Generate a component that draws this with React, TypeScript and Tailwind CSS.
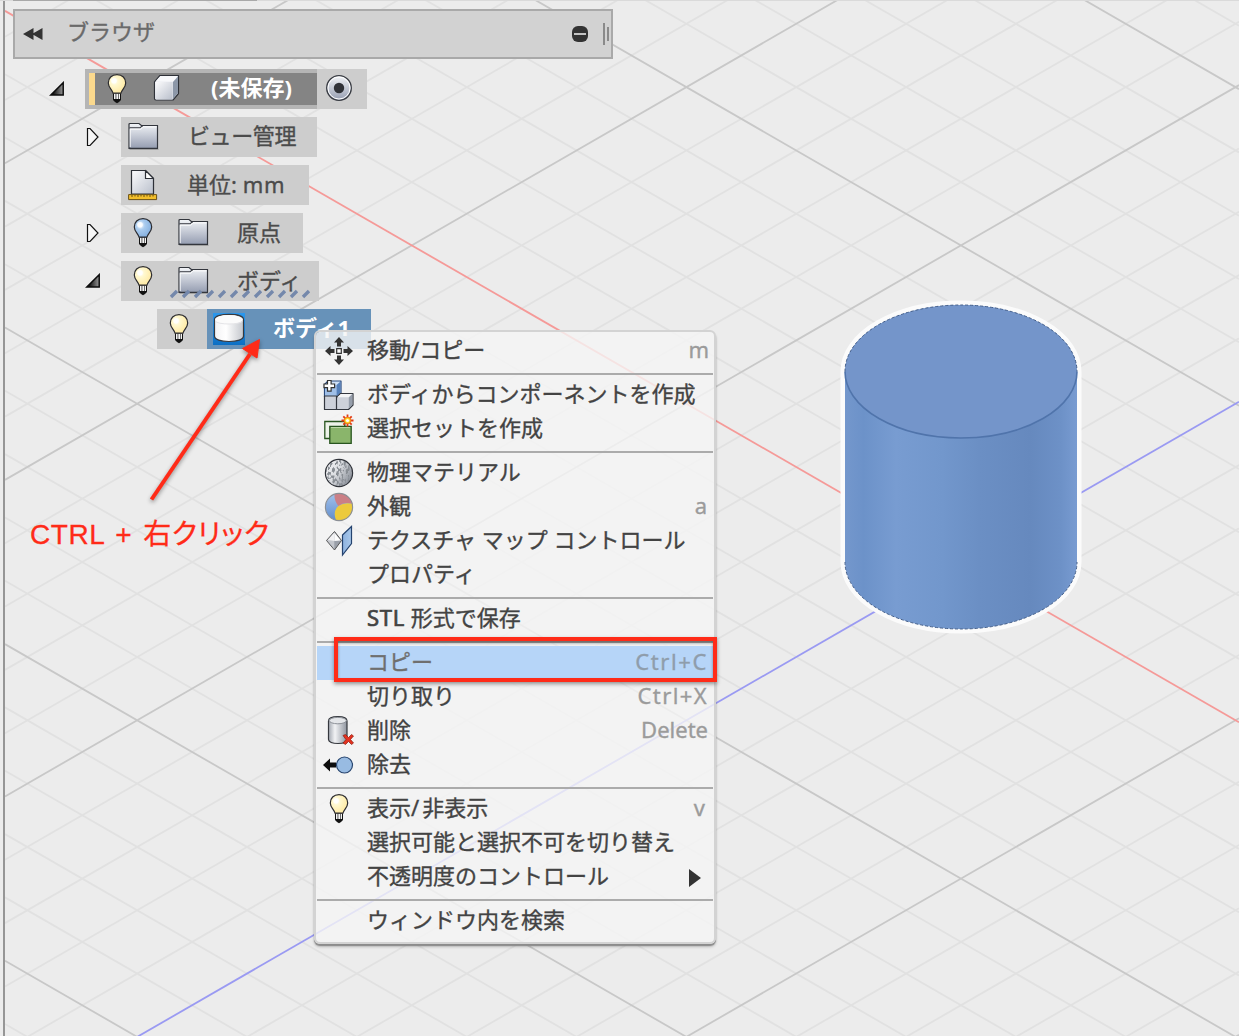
import type { ReactNode } from "react";

const SLOPE = 158.3 / 274.6;
const STEPS = Array.from({ length: 45 }, (_, i) => i - 22);

function gridPath(sign: number, k: number) {
  const at = (x: number) => (562 + 63.32 * k + sign * SLOPE * (x - 961)).toFixed(1);
  return `M5 ${at(5)}L1239 ${at(1239)}`;
}

function Viewport() {
  const minor = STEPS.filter((k) => k % 5 !== 0);
  const major = STEPS.filter((k) => k % 5 === 0 && k !== 0);
  const lines = (ks: number[]) => ks.map((k) => gridPath(1, k) + gridPath(-1, k)).join("");
  const body = "M845 371.5A116 66.5 0 0 1 1077 371.5V562A116 67 0 0 1 845 562Z";
  return (
    <svg className="absolute inset-0" width="1239" height="1036" viewBox="0 0 1239 1036">
      <defs>
        <linearGradient id="side">
          <stop offset="0" stopColor="#7497cc" />
          <stop offset=".08" stopColor="#6c92c9" />
          <stop offset=".22" stopColor="#789cd1" />
          <stop offset=".42" stopColor="#7297cc" />
          <stop offset=".58" stopColor="#6b8fc4" />
          <stop offset=".8" stopColor="#6689be" />
          <stop offset=".93" stopColor="#6d91c7" />
          <stop offset="1" stopColor="#789bd1" />
        </linearGradient>
      </defs>
      <g fill="none">
        <path d={lines(minor)} stroke="#e1e1e1" strokeWidth="1.800" />
        <path d={lines(major)} stroke="#c8c8c8" strokeWidth="1.800" />
        <path d={gridPath(1, 0)} stroke="#f59a98" strokeWidth="1.800" />
        <path d={gridPath(-1, 0)} stroke="#9a9af2" strokeWidth="1.800" />
      </g>
      <path d={body} fill="#fbfbfb" stroke="#fbfbfb" strokeWidth="9" strokeLinejoin="round" />
      <path d={body} fill="url(#side)" />
      <ellipse cx="961" cy="371.500" rx="116" ry="66.500" fill="#7495ca" />
      <path d="M845 371.500A116 66.500 0 0 0 1077 371.500" fill="none" stroke="#5074ab" strokeWidth="1.600" />
      <path d="M845 371.500A116 66.500 0 0 1 1077 371.500" fill="none" stroke="#46608a" strokeWidth="1" strokeDasharray="3 2" />
      <path d="M845 562A116 67 0 0 0 1077 562" fill="none" stroke="#46608a" strokeWidth="1" strokeDasharray="3 2" />
    </svg>
  );
}

function Gradients() {
  return (
    <svg className="absolute size-0">
      <defs>
        <linearGradient id="steel" x2="0" y2="1">
          <stop offset="0" stopColor="#f3f5f8" />
          <stop offset="1" stopColor="#959db1" />
        </linearGradient>
        <linearGradient id="pale" x2="1" y2="1">
          <stop offset="0" stopColor="#fdfdfe" />
          <stop offset="1" stopColor="#b9bfcb" />
        </linearGradient>
        <linearGradient id="metal">
          <stop offset="0" stopColor="#a2a7b0" />
          <stop offset=".35" stopColor="#f2f3f5" />
          <stop offset="1" stopColor="#8e949e" />
        </linearGradient>
        <linearGradient id="stone" x2="1" y2=".6">
          <stop offset="0" stopColor="#f4f4f6" />
          <stop offset=".5" stopColor="#dcdee2" />
          <stop offset="1" stopColor="#8f949d" />
        </linearGradient>
        <linearGradient id="drum">
          <stop offset="0" stopColor="#f2f2f4" />
          <stop offset=".4" stopColor="#fff" />
          <stop offset="1" stopColor="#c3c6cc" />
        </linearGradient>
        <linearGradient id="ink">
          <stop offset=".2" stopColor="#111" />
          <stop offset="1" stopColor="#999" />
        </linearGradient>
        <linearGradient id="sky">
          <stop offset="0" stopColor="#8db2df" />
          <stop offset="1" stopColor="#a9c8ea" />
        </linearGradient>
        <linearGradient id="marine" x2="0" y2="1">
          <stop offset="0" stopColor="#a3c3ec" />
          <stop offset="1" stopColor="#5f8ccc" />
        </linearGradient>
        <radialGradient id="warm" cx=".35" cy=".35" r=".75">
          <stop offset="0" stopColor="#fff" />
          <stop offset=".3" stopColor="#fff8cf" />
          <stop offset="1" stopColor="#ffe79b" />
        </radialGradient>
        <radialGradient id="cool" cx=".35" cy=".35" r=".75">
          <stop offset="0" stopColor="#fff" />
          <stop offset=".35" stopColor="#a9cbee" />
          <stop offset="1" stopColor="#7fabdc" />
        </radialGradient>
      </defs>
    </svg>
  );
}

const Bulb = ({ off = false }: { off?: boolean }) => (
  <svg className="block shrink-0" width="22" height="32" viewBox="0 0 22 32">
    <path d="M7 19.500h8V27l-2 2-2 1.300-2-1.300-2-2z" fill="#111" />
    <path d="M8 20.500h1.600v5.500H8zM10.300 20.500h1.900v5.500h-1.900zM12.800 20.500h1.200v5.500h-1.200z" fill="#f4f4f4" />
    <path
      d="M11 1.600C5.600 1.600 2.300 5.300 2.300 10c0 4.500 3.800 6.200 4.700 10.200h8c.9-4 4.700-5.700 4.700-10.200 0-4.700-3.300-8.400-8.700-8.400z"
      fill={off ? "url(#cool)" : "url(#warm)"}
      stroke="#2c2c30"
      strokeWidth="1.200"
    />
    <circle cx="8" cy="7.800" r="2.800" fill="#fff" opacity=".85" />
  </svg>
);

const Folder = () => (
  <svg className="block shrink-0" width="32" height="30" viewBox="0 0 32 30">
    <path d="M2.500 27.500h29" stroke="#777" opacity=".5" />
    <path d="M2 26.300V2.500q0-1 1-1h9l3 2.500v-.5h15.500v22.800z" fill="url(#steel)" stroke="#33363d" strokeWidth="1.200" />
    <path d="M2.500 5.800H13l2.200-2" fill="none" stroke="#33363d" strokeWidth="1.100" />
    <path d="M3.200 25V7.200h10.500l2.300-2.300h13.600" fill="none" stroke="#fff" strokeWidth=".9" />
  </svg>
);

const Cube = () => (
  <svg className="block" width="28" height="28" viewBox="0 0 28 28">
    <path d="M1.500 8L7 1.500h18.500v18L20 26H3q-1.500 0-1.500-1.500z" fill="#dfe3ea" stroke="#2e3138" strokeWidth="1.200" strokeLinejoin="round" />
    <path d="M2.200 7.800L7.300 2.100h17.500L20 7.800z" fill="#f8f9fb" />
    <path d="M2.200 8h17.300v17.400H3.200l-1-1z" fill="url(#pale)" />
    <path d="M20 8l5-5.500V19l-5 6z" fill="#8c97a8" />
  </svg>
);

const Ruler = () => (
  <svg className="block shrink-0" width="32" height="32" viewBox="0 0 32 32">
    <path d="M4.500 25V1.500h14l8 8V25z" fill="url(#pale)" stroke="#2e3138" strokeWidth="1.200" />
    <path d="M18.500 1.500v8h8z" fill="#fff" stroke="#2e3138" strokeWidth="1.200" strokeLinejoin="round" />
    <path d="M1.600 25.600h28v5h-28z" fill="#f3bf2b" stroke="#6b5115" strokeWidth="1" />
    <path d="M5 26v2M8 26v1.500M11 26v2M14 26v1.500M17 26v2M20 26v1.500M23 26v2M26 26v1.500" stroke="#6b5115" />
  </svg>
);

const Drum = () => (
  <svg className="block" width="32" height="32" viewBox="0 0 32 32">
    <path d="M1.500 6.500C1.500 3 8 1.300 16 1.300S30.500 3 30.500 6.500V23c0 3.500-6.500 5.500-14.500 5.500S1.500 26.500 1.500 23z" fill="url(#drum)" stroke="#36393f" strokeWidth="1.200" />
    <ellipse cx="16" cy="6.600" rx="13.700" ry="4.500" fill="#fbfbfb" />
    <path d="M2.300 8C4 12 28 12 29.700 8" fill="none" stroke="#e4e4e7" />
  </svg>
);

const Expanded = () => (
  <svg className="block" width="16" height="16" viewBox="0 0 16 16">
    <path d="M1.800 14L14.200 1.700V14z" fill="url(#ink)" stroke="#0d0d0d" strokeWidth="1.500" />
  </svg>
);

const Collapsed = () => (
  <svg className="block" width="14" height="20" viewBox="0 0 14 20">
    <path d="M1.500 1.500h2.500l8 8.500-8 8.500h-2.500z" fill="#f7f7f7" stroke="#111" strokeWidth="1.200" />
  </svg>
);

function Label({ children, className }: { children: ReactNode; className: string }) {
  return (
    <span className={`block shrink-0 whitespace-nowrap text-[22px] leading-none [-webkit-text-stroke:0.35px] ${className}`}>
      {children}
    </span>
  );
}

function Browser() {
  return (
    <section className="absolute top-[9px] left-[13px] w-[600px] text-[#4b4b4b]">
      <header className="flex h-[50px] items-center border-2 border-[#a9a9a9] bg-[#d2d2d2]">
        <svg className="ml-2" width="20" height="14" viewBox="0 0 20 14">
          <path d="M10.500 1v12L0 7zM19.500 1v12L9 7z" fill="#333" />
        </svg>
        <Label className="-mt-[6px] ml-6 w-[94px] text-[#6a6a6a]">ブラウザ</Label>
        <div className="ml-auto flex h-4 w-4 items-center justify-center rounded-[6px] bg-[#333]">
          <div className="h-[2px] w-3 bg-[#c4c4c4]" />
        </div>
        <div className="ml-[15px] h-[22px] w-[2px] bg-[#8a8a8a]" />
        <div className="mr-[2px] ml-[2px] h-[14px] w-[2px] bg-[#8a8a8a]" />
      </header>
      <div className="mt-[10px] flex flex-col gap-2">
        <div className="flex h-10 items-center">
          <div className="ml-9 w-9">
            <Expanded />
          </div>
          <div className="flex h-10 w-[232px] border-y-4 border-l-4 border-[#b5b5b5] bg-[#848484]">
            <div className="w-[6px] bg-[#fbd98d]" />
            <div className="ml-[11px]">
              <Bulb />
            </div>
            <div className="mt-[1px] ml-[25px]">
              <Cube />
            </div>
            <Label className="mt-[3px] ml-[30px] font-bold text-white [-webkit-text-stroke:0]">(未保存)</Label>
          </div>
          <div className="flex h-10 w-[50px] items-center bg-[#cdcdcd] pl-2">
            <svg className="-mt-[2px]" width="28" height="28" viewBox="0 0 28 28">
              <circle cx="14" cy="14" r="12.300" fill="url(#steel)" stroke="#383b42" strokeWidth="1.300" />
              <circle cx="14" cy="14" r="11" fill="none" stroke="#fff" />
              <circle cx="14" cy="14" r="5.200" fill="#303238" />
            </svg>
          </div>
        </div>
        <div className="flex h-10 items-center">
          <div className="ml-[73px] w-[35px]">
            <Collapsed />
          </div>
          <div className="flex h-10 w-[196px] items-center bg-[#cdcdcd] pl-[6px]">
            <Folder />
            <Label className="-mt-[4px] ml-[29px] tracking-[-0.4px]">ビュー管理</Label>
          </div>
        </div>
        <div className="ml-[108px] flex h-10 w-[188px] items-center bg-[#cdcdcd] pl-[6px]">
          <Ruler />
          <Label className="-mt-[3px] ml-[28px]">
            単位: <span className="tracking-[0.800px]">mm</span>
          </Label>
        </div>
        <div className="flex h-10 items-center">
          <div className="ml-[73px] w-[35px]">
            <Collapsed />
          </div>
          <div className="flex h-10 w-[182px] items-center bg-[#cdcdcd] pl-[11px]">
            <Bulb off />
            <div className="ml-[23px]">
              <Folder />
            </div>
            <Label className="-mt-[3px] ml-7">原点</Label>
          </div>
        </div>
        <div className="flex h-10 items-center">
          <div className="ml-[72px] w-9">
            <Expanded />
          </div>
          <div className="relative flex h-10 w-[198px] items-center bg-[#cdcdcd] pl-[11px]">
            <Bulb />
            <div className="ml-[23px]">
              <Folder />
            </div>
            <Label className="-mt-[3px] ml-7">ボディ</Label>
            <svg className="absolute bottom-[2px] left-[48px]" width="144" height="10" viewBox="0 0 144 10">
              <path
                d={Array.from({ length: 12 }, (_, i) => `M${2 + i * 12} 8l6-6`).join("")}
                stroke="#7488ab"
                strokeWidth="3.400"
              />
            </svg>
          </div>
        </div>
        <div className="ml-[144px] flex h-10">
          <div className="flex w-[50px] items-center bg-[#cdcdcd] pl-[11px]">
            <Bulb />
          </div>
          <div className="flex w-[164px] items-center bg-[#6792b9] pl-[6px]">
            <div className="size-8 bg-linear-to-b from-[#2b98ee] to-[#0b6fc4]">
              <Drum />
            </div>
            <Label className="-mt-[4px] ml-7 font-bold text-white [-webkit-text-stroke:0]">ボディ1</Label>
          </div>
        </div>
      </div>
    </section>
  );
}

const MoveIcon = () => (
  <svg width="30" height="30" viewBox="0 0 30 30">
    <path d="M15 1l5 5.500H17v4h-4V6.500H10zM15 29l5-5.500H17v-4h-4v4H10zM1 15l5.500-5V13h4v4h-4v3zM29 15l-5.500-5V13h-4v4h4v3z" fill="#333" />
    <path d="M12.700 12.700h4.600v4.600h-4.600z" fill="#fff" stroke="#333" strokeWidth="1.200" />
  </svg>
);

const ComponentIcon = () => (
  <svg width="32" height="32" viewBox="0 0 32 32">
    <g strokeLinejoin="round" strokeWidth="1.200">
      <path d="M1.500 5.500L5 2h13v12.500L13.500 18h-12z" fill="#cfe0f6" stroke="#284a7e" />
      <path d="M2 6h11.500v11H2z" fill="#9fbfe8" />
      <path d="M13.500 6L17.500 2.500V14l-4 3.500z" fill="#5580bb" />
      <path d="M1.500 17h12v13.500h-12zM13.500 18.500l4-4H30V26l-4.500 4.500h-12z" fill="#cdd1da" stroke="#343840" />
      <path d="M14.300 18.300l3.500-3.200h11.400l-3.400 3.200z" fill="#f4f5f7" />
      <path d="M25.800 18.500l3.600-3.500v10.700l-3.600 3.600z" fill="#969eab" />
    </g>
    <path d="M4.500 1.500h3.600V5h3.500v3.600H8.100v3.500H4.500V8.600H1V5h3.500z" fill="#fff" stroke="#333" strokeWidth="1.200" />
  </svg>
);

const SetIcon = () => (
  <svg width="32" height="32" viewBox="0 0 32 32">
    <path d="M1.800 8.500h20v17h-20z" fill="#eef3ea" stroke="#28551f" strokeWidth="1.300" />
    <path d="M6.800 13.300h21.400v17H6.800z" fill="#8ab56b" stroke="#28551f" strokeWidth="1.300" />
    <path d="M8 14.500h19" stroke="#b9d6a4" />
    <path d="M24.500 1.500v12M18.500 7.500h12M20.300 3.300l8.400 8.400M28.700 3.300l-8.400 8.400" stroke="#e23b16" strokeWidth="1.800" />
    <circle cx="24.500" cy="7.500" r="3.200" fill="#ffdd24" stroke="#ef7d18" />
    <circle cx="24.500" cy="7.500" r="1.600" fill="#fff" />
  </svg>
);

const MaterialIcon = () => (
  <svg width="30" height="30" viewBox="0 0 30 30">
    <defs>
      <filter id="grain" x="0" y="0" width="1" height="1">
        <feTurbulence type="fractalNoise" baseFrequency=".45 .28" numOctaves="2" seed="4" />
        <feColorMatrix values="0 0 0 0 .25  0 0 0 0 .27  0 0 0 0 .3  6 0 0 0 -2.8" />
        <feComposite in2="SourceGraphic" operator="in" />
      </filter>
    </defs>
    <circle cx="15" cy="15" r="13.500" fill="url(#stone)" />
    <circle cx="15" cy="15" r="13" fill="#000" filter="url(#grain)" />
    <circle cx="15" cy="15" r="13.600" fill="none" stroke="#30333a" strokeWidth="1.200" />
  </svg>
);

const AppearanceIcon = () => (
  <svg width="30" height="30" viewBox="0 0 30 30">
    <circle cx="15" cy="15" r="13.500" fill="url(#marine)" />
    <path d="M10.500 2.200A13.500 13.500 0 0 1 28.500 12Q20 9 14.500 14Q10 9 10.500 2.200z" fill="#cb7f86" />
    <path d="M28.400 11.800A13.500 13.500 0 0 1 12 28.200Q8.500 19 14.500 14Q20 10 28.400 11.800z" fill="#ecca3c" />
    <circle cx="15" cy="15" r="13.600" fill="none" stroke="#8b8f96" strokeWidth="1.100" />
  </svg>
);

const TextureIcon = () => (
  <svg width="30" height="32" viewBox="0 0 30 32">
    <path d="M18.500 10L27.500 1.500v17l-9 11.500z" fill="url(#sky)" stroke="#24436f" strokeWidth="1.200" />
    <path d="M2.500 15.500L10.500 6.500l7 9-7 9.500z" fill="#9a9fa8" stroke="#555" strokeWidth="1" strokeLinejoin="round" />
    <path d="M3.200 15.500L10.300 7.500v8.500z" fill="#f1f1f3" />
    <path d="M10.300 7.500l6.400 8-6.400.5z" fill="#fdfdfd" />
    <path d="M3.200 15.500l7.100.5v8z" fill="#c3c6cc" />
  </svg>
);

const DeleteIcon = () => (
  <svg width="30" height="32" viewBox="0 0 30 32">
    <path d="M4.500 6C4.500 3.500 8 1.700 14 1.700S23 3.500 23 6v18.500c0 2.500-3.500 4-9 4s-9.500-1.500-9.500-4z" fill="url(#metal)" stroke="#34373d" strokeWidth="1.200" />
    <ellipse cx="13.800" cy="5.600" rx="8.500" ry="3.200" fill="#e4e6e9" stroke="#8d9198" />
    <path d="M19 20.500l2.500-1 3 3 3-3 2 1.500-3 3.500 3 3.500-2 1.500-3-3-3 3-2.500-1.500 3-3.500z" fill="#e33220" stroke="#8d1b10" strokeWidth=".7" />
  </svg>
);

const RemoveIcon = () => (
  <svg className="-ml-[2px]" width="32" height="22" viewBox="0 0 32 22">
    <path d="M1 11l7-6.500v4h6v5H8v4z" fill="#0d0d0d" />
    <circle cx="22.500" cy="11" r="8" fill="#98bbe2" stroke="#29466f" strokeWidth="1.200" />
  </svg>
);

type Item = { label: ReactNode; keys?: string; pad?: string; icon?: ReactNode; active?: boolean; submenu?: boolean };

const GROUPS: Item[][] = [
  [{ label: "移動/コピー", keys: "m", pad: "pr-[5px]", icon: <MoveIcon /> }],
  [
    { label: "ボディからコンポーネントを作成", icon: <ComponentIcon /> },
    { label: "選択セットを作成", icon: <SetIcon /> },
  ],
  [
    { label: "物理マテリアル", icon: <MaterialIcon /> },
    { label: "外観", keys: "a", pad: "pr-[7px]", icon: <AppearanceIcon /> },
    { label: "テクスチャ マップ コントロール", icon: <TextureIcon /> },
    { label: "プロパティ" },
  ],
  [
    {
      label: (
        <>
          <span className="tracking-[0.700px] [-webkit-text-stroke:0.7px]">STL</span> 形式で保存
        </>
      ),
    },
  ],
  [
    { label: "コピー", keys: "Ctrl+C", pad: "pr-[6px] tracking-[1.600px]", active: true },
    { label: "切り取り", keys: "Ctrl+X", pad: "pr-[6px] tracking-[1.400px]" },
    { label: "削除", keys: "Delete", pad: "pr-[6px]", icon: <DeleteIcon /> },
    { label: "除去", icon: <RemoveIcon /> },
  ],
  [
    {
      label: (
        <>
          表示<span className="tracking-[3px]">/</span>非表示
        </>
      ),
      keys: "v",
      pad: "pr-[9px]",
      icon: <Bulb />,
    },
    { label: "選択可能と選択不可を切り替え" },
    { label: "不透明度のコントロール", submenu: true },
  ],
  [{ label: "ウィンドウ内を検索" }],
];

function MenuRow({ item }: { item: Item }) {
  return (
    <li className={`mx-px flex h-[34px] items-center ${item.active ? "bg-[#b6d5f8] text-[#6f6f6f]" : ""}`}>
      <div className="flex w-[45px] shrink-0 items-center justify-center pr-px">{item.icon}</div>
      <Label className="-mt-[5px] ml-[5px]">{item.label}</Label>
      {item.keys && (
        <Label className={`-mt-[4px] -mr-px ml-auto ${item.pad} ${item.active ? "text-[#8f9dab]" : "text-[#9b9b9b]"}`}>
          {item.keys}
        </Label>
      )}
      {item.submenu && (
        <svg className="mt-[2px] mr-3 ml-auto" width="12" height="18" viewBox="0 0 12 18">
          <path d="M0 0L12 9 0 18z" fill="#333" />
        </svg>
      )}
    </li>
  );
}

function ContextMenu() {
  return (
    <div className="absolute top-[330px] left-[314px] w-[402px] rounded-[6px] border-2 border-[#d3d3d3] bg-[#f5f5f5]/80 bg-clip-padding pt-[2px] pb-[4px] text-[#434343] shadow-[0_2px_1px_#8c8c8c,0_3px_3px_#0003]">
      {GROUPS.map((group, i) => (
        <ul key={i}>
          {i > 0 && <li className="mx-px mt-[5px] mb-[3px] h-[2px] bg-[#ababab]" />}
          {group.map((item, j) => (
            <MenuRow key={j} item={item} />
          ))}
        </ul>
      ))}
    </div>
  );
}

function Annotations() {
  return (
    <>
      <div className="absolute top-[637px] left-[334px] h-[45px] w-[383px] border-4 border-[#ff2b18] shadow-[0_2px_4px_#0006,inset_0_2px_3px_#0006]" />
      <svg className="absolute top-[330px] left-[140px] drop-shadow-[0_2px_2px_#0006]" width="130" height="180" viewBox="0 0 130 180">
        <path d="M11.500 169.500L110 24" stroke="#ff2b18" strokeWidth="4" />
        <path d="M119.500 9.500L117 28 102.500 18.500z" fill="#ff2b18" stroke="#ff2b18" />
      </svg>
      <p className="absolute top-[519px] left-[30px] font-['Liberation_Sans','Noto_Sans_CJK_JP',sans-serif] text-[28px] leading-8 tracking-[0.600px] whitespace-nowrap text-[#ff2b18] [-webkit-text-stroke:0.3px] [font-feature-settings:'palt'] [word-spacing:2.500px]">
        CTRL + 右クリック
      </p>
    </>
  );
}

export default function App() {
  return (
    <main className="relative h-[1036px] w-[1239px] overflow-hidden bg-[#ececec] font-['Noto_Sans','Noto_Sans_CJK_JP',sans-serif]">
      <Gradients />
      <Viewport />
      <div className="absolute inset-y-0 left-0 w-[5px] border-r-2 border-[#969696] bg-[#ececec]" />
      <div className="absolute inset-x-0 top-0 h-px bg-[#dadada]" />
      <div className="absolute top-0 left-[13px] h-px w-[244px] bg-[#a9a9a9]" />
      <Browser />
      <ContextMenu />
      <Annotations />
    </main>
  );
}
